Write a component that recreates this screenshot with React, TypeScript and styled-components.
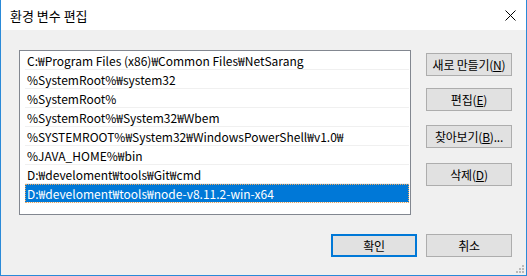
import styled, { createGlobalStyle } from 'styled-components'

const GlobalStyle = createGlobalStyle`
  html, body {
    margin: 0;
    padding: 0;
    background: #ffffff;
  }
  body {
    font-family: "Noto Sans CJK KR", "Noto Sans", sans-serif;
    font-size: 12px;
    color: #000;
  }
`

const Window = styled.div`
  position: relative;
  width: 527px;
  height: 276px;
  box-sizing: border-box;
  border: 1px solid #2a8ad8;
  border-top: none;
  background: #f0f0f0;
  display: flex;
  flex-direction: column;
  overflow: hidden;
`

const TitleBar = styled.div`
  height: 30px;
  background: #fff;
  display: flex;
  align-items: center;
  justify-content: space-between;
  padding: 0 9px 0 9px;
  flex-shrink: 0;
`

const Title = styled.span`
  font-size: 13px;
  line-height: 1;
  padding-top: 1px;
`

const CloseBtn = styled.div`
  width: 12px;
  height: 12px;
  display: flex;
  align-items: center;
  justify-content: center;
  margin-right: 1px;
`

const Body = styled.div`
  flex: 1;
  padding: 20px 14px 0 18px;
  display: flex;
  flex-direction: column;
`

const MainRow = styled.div`
  display: flex;
  gap: 15px;
`

const ListBox = styled.div`
  width: 392px;
  height: 165px;
  box-sizing: border-box;
  border: 1px solid #828790;
  background: #fff;
  padding: 0 1px 0 5px;
  display: flex;
  flex-direction: column;
`

const Row = styled.div<{ $selected?: boolean }>`
  height: 19px;
  box-sizing: border-box;
  border-bottom: 1px solid ${p => (p.$selected ? '#f0f0f0' : '#f0f0f0')};
  padding-left: 2px;
  display: flex;
  align-items: center;
  white-space: nowrap;
  font-size: 12px;
  background: ${p => (p.$selected ? '#0078d7' : 'transparent')};
  color: ${p => (p.$selected ? '#fff' : '#000')};
  outline: ${p => (p.$selected ? '1px dotted #e8a860' : 'none')};
  outline-offset: -1px;
`

const SideButtons = styled.div`
  display: flex;
  flex-direction: column;
  padding-top: 3px;
`

const Button = styled.div<{ $gap?: number; $default?: boolean }>`
  width: 86px;
  height: 23px;
  box-sizing: border-box;
  margin-top: ${p => p.$gap ?? 0}px;
  background: #e1e1e1;
  border: ${p => (p.$default ? '2px solid #0078d7' : '1px solid #adadad')};
  display: flex;
  align-items: center;
  justify-content: center;
  white-space: nowrap;
  font-size: 12px;
  letter-spacing: -0.2px;
`

const Key = styled.u`
  text-underline-offset: 1px;
`

const Footer = styled.div`
  display: flex;
  justify-content: flex-end;
  gap: 9px;
  margin-top: 19px;
`

const Grip = styled.svg`
  position: absolute;
  right: 2px;
  bottom: 2px;
`

const paths = [
  'C:₩Program Files (x86)₩Common Files₩NetSarang',
  '%SystemRoot%₩system32',
  '%SystemRoot%',
  '%SystemRoot%₩System32₩Wbem',
  '%SYSTEMROOT%₩System32₩WindowsPowerShell₩v1.0₩',
  '%JAVA_HOME%₩bin',
  'D:₩develoment₩tools₩Git₩cmd',
  'D:₩develoment₩tools₩node-v8.11.2-win-x64',
]

const App = () => {
  return (
    <>
      <GlobalStyle />
      <Window>
        <TitleBar>
          <Title>환경 변수 편집</Title>
          <CloseBtn>
            <svg width="11" height="11" viewBox="0 0 11 11">
              <path d="M0.5 0.5 L10.5 10.5 M10.5 0.5 L0.5 10.5" stroke="#000" strokeWidth="1" />
            </svg>
          </CloseBtn>
        </TitleBar>
        <Body>
          <MainRow>
            <ListBox>
              {paths.map((p, i) => (
                <Row key={p} $selected={i === paths.length - 1}>{p}</Row>
              ))}
            </ListBox>
            <SideButtons>
              <Button>새로 만들기(<Key>N</Key>)</Button>
              <Button $gap={12}>편집(<Key>E</Key>)</Button>
              <Button $gap={14}>찾아보기(<Key>B</Key>)...</Button>
              <Button $gap={15}>삭제(<Key>D</Key>)</Button>
            </SideButtons>
          </MainRow>
          <Footer>
            <Button $default>확인</Button>
            <Button>취소</Button>
          </Footer>
        </Body>
        <Grip width="9" height="9" viewBox="0 0 9 9">
          {[[7, 1], [4, 4], [7, 4], [1, 7], [4, 7], [7, 7]].map(([x, y]) => (
            <rect key={`${x}-${y}`} x={x} y={y} width="2" height="2" fill="#b9b9b9" />
          ))}
        </Grip>
      </Window>
    </>
  )
}

export default App
